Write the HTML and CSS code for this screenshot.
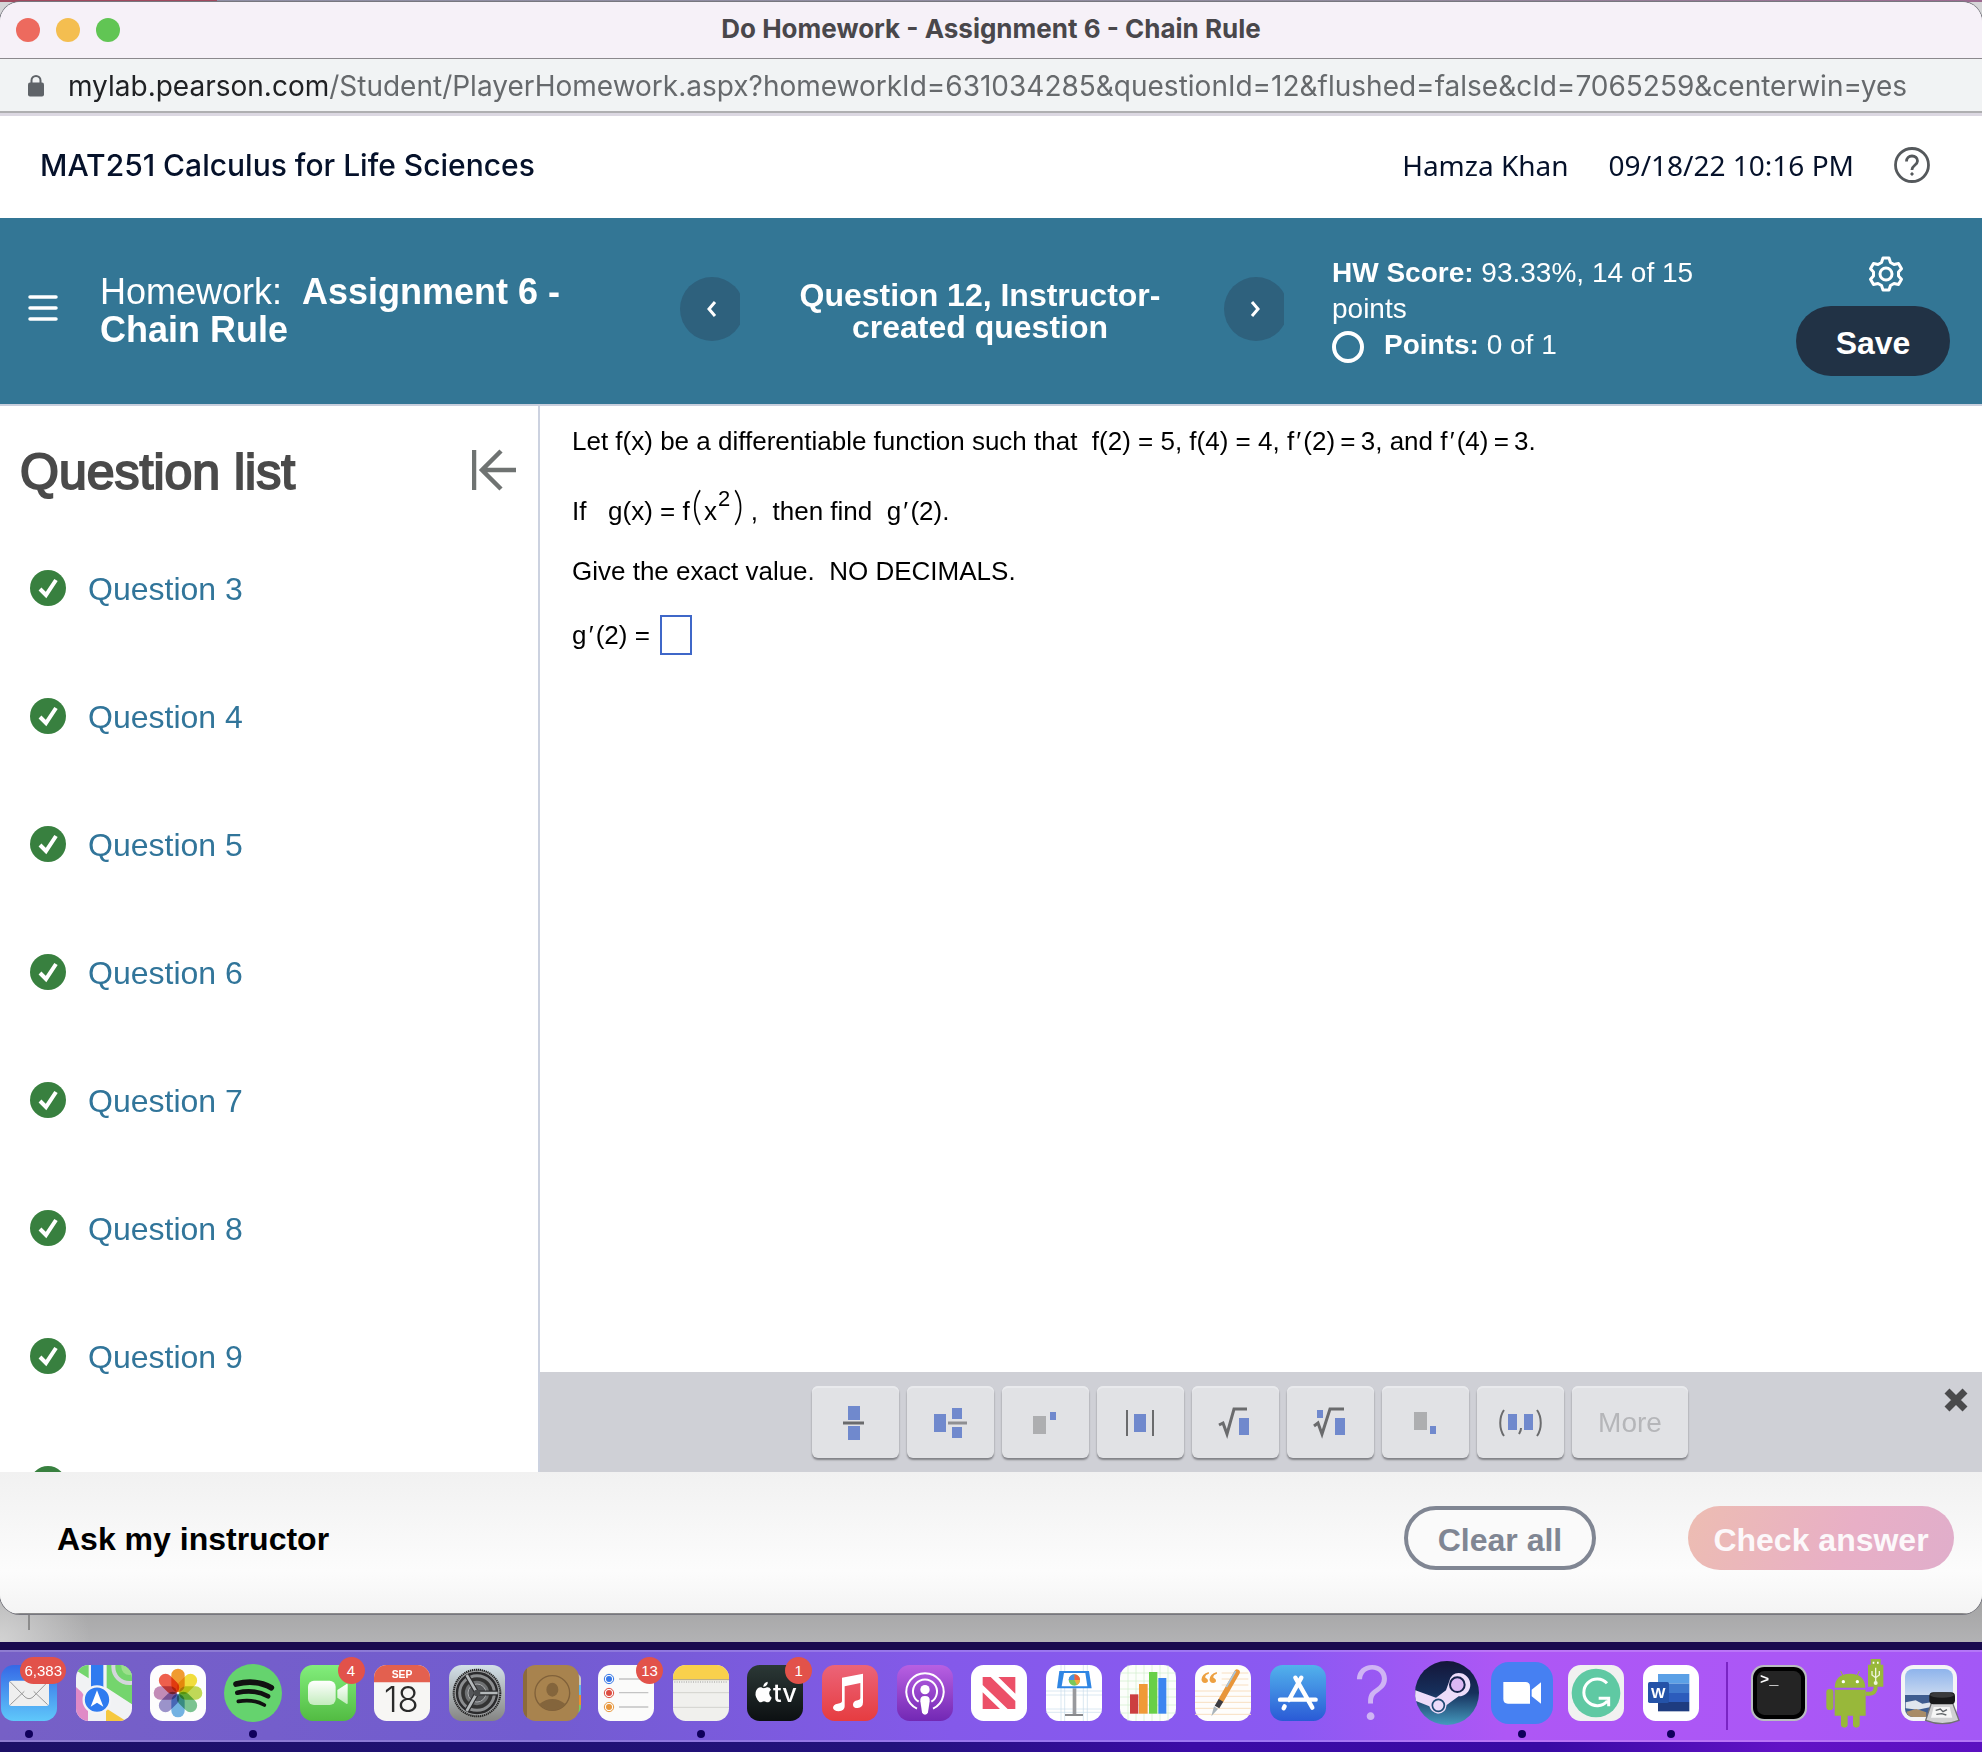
FILE: index.html
```html
<!DOCTYPE html>
<html lang="en">
<head>
    <meta charset="UTF-8">
    <meta name="viewport" content="width=device-width, initial-scale=1.0">
    <title>Do Homework - Assignment 6 - Chain Rule</title>
    <link rel="stylesheet" href="styles.css">
</head>
<body>

<div class="window">
    <div class="title-bar">
        <div class="lights">
            <span class="light red"></span>
            <span class="light yellow"></span>
            <span class="light green"></span>
        </div>
        <div class="window-title">Do Homework - Assignment 6 - Chain Rule</div>
    </div>

    <div class="url-bar">
        <svg class="lock" viewBox="0 0 18 24"><path d="M4.500 10V6.500a4.500 4.500 0 0 1 9 0V10" fill="none" stroke="#5f6368" stroke-width="2"/><rect x="1" y="8.500" width="16" height="14" rx="2" fill="#5f6368"/></svg>
        <div class="url"><span class="host">mylab.pearson.com</span>/Student/PlayerHomework.aspx?homeworkId=631034285&amp;questionId=12&amp;flushed=false&amp;cId=7065259&amp;centerwin=yes</div>
    </div>

    <header class="course-bar">
        <div class="course">MAT251 Calculus for Life Sciences</div>
        <div class="user">Hamza Khan</div>
        <div class="date">09/18/22 10:16 PM</div>
        <button class="icon-button help" aria-label="Help">
            <svg viewBox="0 0 36 36" fill="none" stroke="#55595c" stroke-width="2.800"><circle cx="18" cy="18" r="16.500"/><path d="M12.500 14.500c0-3.300 2.300-5.500 5.500-5.500s5.500 2 5.500 5c0 4-5.500 4.500-5.500 8.500v.5"/><circle cx="18" cy="27" r="1.200" fill="#55595c" stroke-width="1"/></svg>
        </button>
    </header>

    <div class="homework-bar">
        <button class="icon-button menu" aria-label="Menu">
            <svg viewBox="0 0 30 28" stroke="#fff" stroke-width="3.500" stroke-linecap="round"><path d="M2 3h26M2 14h26M2 25h26"/></svg>
        </button>
        <h1 class="homework-title">Homework:&nbsp; <b>Assignment 6 - Chain Rule</b></h1>
        <nav class="pager">
            <button class="round" aria-label="Previous question">
                <svg viewBox="0 0 64 64" fill="none" stroke="#fff" stroke-width="3"><path d="M35 25l-6 7 6 7"/></svg>
            </button>
            <h2 class="question-title">Question 12, Instructor-created question</h2>
            <button class="round" aria-label="Next question">
                <svg viewBox="0 0 64 64" fill="none" stroke="#fff" stroke-width="3"><path d="M28 25l6 7-6 7"/></svg>
            </button>
        </nav>
        <div class="score">
            <div><b>HW Score:</b> 93.33%, 14 of 15 points</div>
            <div class="points"><span class="ring"></span><span><b>Points:</b> 0 of 1</span></div>
        </div>
        <div class="actions">
            <button class="icon-button settings" aria-label="Settings">
                <svg viewBox="0 0 36 36" fill="none" stroke="#fff" stroke-width="3" stroke-linejoin="round"><path d="M15 2h6l1.500 4.500 3.500 2 4.500-1 3 5.200-3 3.300v4l3 3.300-3 5.200-4.500-1-3.500 2L21 34h-6l-1.500-4.500-3.500-2-4.500 1-3-5.200 3-3.300v-4l-3-3.300 3-5.200 4.500 1 3.500-2z"/><circle cx="18" cy="18" r="6"/></svg>
            </button>
            <button class="save">Save</button>
        </div>
    </div>

    <div class="content">
        <aside class="sidebar">
            <div class="sidebar-head">
                <h2>Question list</h2>
                <button class="icon-button collapse" aria-label="Collapse list">
                    <svg viewBox="0 0 44 42" fill="none" stroke="#6f7372" stroke-width="4.500"><path d="M2 1v40M44 21H11M29 2L10 21l19 19"/></svg>
                </button>
            </div>
            <svg class="defs">
                <symbol id="check" viewBox="0 0 36 36"><circle cx="18" cy="18" r="18" fill="#38803f"/><path d="M10 19l6 6L26 10" fill="none" stroke="#fff" stroke-width="4"/></symbol>
            </svg>
            <ul class="question-list">
                <li><svg class="check"><use href="#check"/></svg><a href="#">Question 3</a></li>
                <li><svg class="check"><use href="#check"/></svg><a href="#">Question 4</a></li>
                <li><svg class="check"><use href="#check"/></svg><a href="#">Question 5</a></li>
                <li><svg class="check"><use href="#check"/></svg><a href="#">Question 6</a></li>
                <li><svg class="check"><use href="#check"/></svg><a href="#">Question 7</a></li>
                <li><svg class="check"><use href="#check"/></svg><a href="#">Question 8</a></li>
                <li><svg class="check"><use href="#check"/></svg><a href="#">Question 9</a></li>
                <li><svg class="check"><use href="#check"/></svg></li>
            </ul>
        </aside>

        <main class="work">
            <div class="problem">
                <p>Let f(x) be a differentiable function such that&nbsp; f(2) = 5, f(4) = 4, f&#8202;&prime;&#8202;(2)&#8201;=&#8201;3, and f&#8202;&prime;&#8202;(4)&#8201;=&#8201;3.</p>
                <p>If&nbsp;&nbsp; g(x) = f<span class="paren">(</span>x<sup>2</sup><span class="paren">)</span>&#8201;,&nbsp; then find&nbsp; g&#8202;&prime;&#8202;(2).</p>
                <p>Give the exact value.&nbsp; NO DECIMALS.</p>
                <p class="answer-row"><label for="answer">g&#8202;&prime;&#8202;(2) =</label><input type="text" id="answer" class="answer"></p>
            </div>

            <div class="palette">
                <button class="key" aria-label="Fraction"><svg viewBox="0 0 87 72"><path class="blue" d="M36 20h12v14H36zM36 40h12v14H36z"/><path class="line" d="M31 37h21"/></svg></button>
                <button class="key" aria-label="Mixed number"><svg viewBox="0 0 87 72"><path class="blue" d="M27 28h12v18H27zM45 22h10v11H45zM45 41h10v11H45z"/><path class="line light-line" d="M41 37h19"/></svg></button>
                <button class="key" aria-label="Exponent"><svg viewBox="0 0 87 72"><path class="gray" d="M31 30h13v18H31z"/><path class="blue" d="M48 26h6v8h-6z"/></svg></button>
                <button class="key" aria-label="Absolute value"><svg viewBox="0 0 87 72"><path class="blue" d="M37 28h12v18H37z"/><path class="line thin" d="M30 24v26M56 24v26"/></svg></button>
                <button class="key" aria-label="Square root"><svg viewBox="0 0 87 72"><path class="blue" d="M47 32h10v17H47z"/><path class="line root" d="M27 39l4-2 4 11 7-25h13"/></svg></button>
                <button class="key" aria-label="Nth root"><svg viewBox="0 0 87 72"><path class="blue" d="M48 32h10v17H48zM30 24h6v8h-6z"/><path class="line root" d="M27 40l4-3 4 11 8-25h14"/></svg></button>
                <button class="key" aria-label="Subscript"><svg viewBox="0 0 87 72"><path class="gray" d="M32 26h13v18H32z"/><path class="blue" d="M48 40h6v8h-6z"/></svg></button>
                <button class="key" aria-label="Ordered pair"><svg viewBox="0 0 87 72"><path class="blue" d="M31 28h9v16h-9zM47 28h9v16h-9z"/><path class="line thin" d="M27 24c-5 7-5 19 0 26M60 24c5 7 5 19 0 26M44 42c0 3-1 4-2 6"/></svg></button>
                <button class="key more">More</button>
                <button class="icon-button close" aria-label="Close">
                    <svg viewBox="0 0 24 24" stroke="#4a4a4c" stroke-width="7"><path d="M3 3l18 18M21 3L3 21"/></svg>
                </button>
            </div>
        </main>
    </div>

    <footer class="footer">
        <a href="#" class="ask">Ask my instructor</a>
        <button class="pill clear">Clear all</button>
        <button class="pill submit">Check answer</button>
    </footer>
</div>

<div class="behind"></div>

<div class="dock">
    <div class="apps">
        <div class="app running">
            <svg viewBox="0 0 168 168">
                <defs><linearGradient id="mail" x2="0" y2="1"><stop stop-color="#3568e6"/><stop offset="1" stop-color="#5fc8fa"/></linearGradient></defs>
                <rect width="168" height="168" rx="38" fill="url(#mail)"/>
                <rect x="24" y="47" width="120" height="76" rx="8" fill="#efefef"/>
                <path d="M28 119l42-40M140 119L98 79M27 50l45 46q12 10 24 0l45-46" fill="none" stroke="#999" stroke-width="3"/>
            </svg>
            <span class="badge">6,383</span>
        </div>
        <div class="app">
            <svg viewBox="0 0 168 168">
                <defs><clipPath id="tile"><rect width="168" height="168" rx="38"/></clipPath></defs>
                <g clip-path="url(#tile)">
                    <rect width="168" height="168" fill="#f1f2f4"/>
                    <path d="M0 0h38v40L0 16zM92 0h76v118L92 68z" fill="#74d56d"/>
                    <path d="M0 66q36 28 36 60v42H0z" fill="#e08ac6"/>
                    <path d="M90 130l60 38H90z" fill="#f6c83f"/>
                    <path d="M45 0h37v90H45z" fill="#2f7bf0"/>
                    <circle cx="160" cy="6" r="48" fill="none" stroke="#d4d6dc" stroke-width="12"/>
                    <circle cx="160" cy="6" r="24" fill="#9ce08c"/>
                </g>
                <circle cx="63" cy="104" r="40" fill="#2f7bf0" stroke="#f4f4f6" stroke-width="7"/>
                <path d="M63 76l19 49-19-12-19 12z" fill="#fff"/>
            </svg>
        </div>
        <div class="app">
            <svg viewBox="0 0 168 168">
                <rect width="168" height="168" rx="38" fill="#fdfdfd"/>
                <g class="petals">
                    <rect x="64" y="11" width="40" height="70" rx="20" fill="#f29c30"/>
                    <rect x="64" y="11" width="40" height="70" rx="20" fill="#f3df3c" transform="rotate(45 84 84)"/>
                    <rect x="64" y="11" width="40" height="70" rx="20" fill="#c2da58" transform="rotate(90 84 84)"/>
                    <rect x="64" y="11" width="40" height="70" rx="20" fill="#7cc592" transform="rotate(135 84 84)"/>
                    <rect x="64" y="11" width="40" height="70" rx="20" fill="#74b4e4" transform="rotate(180 84 84)"/>
                    <rect x="64" y="11" width="40" height="70" rx="20" fill="#9c94cc" transform="rotate(225 84 84)"/>
                    <rect x="64" y="11" width="40" height="70" rx="20" fill="#c48cb8" transform="rotate(270 84 84)"/>
                    <rect x="64" y="11" width="40" height="70" rx="20" fill="#f0604c" transform="rotate(315 84 84)"/>
                </g>
            </svg>
        </div>
        <div class="app running">
            <svg viewBox="0 0 168 168">
                <circle cx="84" cy="84" r="87" fill="#65d36e"/>
                <path d="M33 57q60-15 106 11" stroke-width="17" class="wave"/><path d="M37 83q52-12 92 11" stroke-width="14" class="wave"/><path d="M40 109q44-8 78 11" stroke-width="11" class="wave"/>
            </svg>
        </div>
        <div class="app">
            <svg viewBox="0 0 168 168">
                <defs><linearGradient id="ft" x2="0" y2="1"><stop stop-color="#82ee7c"/><stop offset="1" stop-color="#52bb42"/></linearGradient><linearGradient id="cam" x2="0" y2="1"><stop stop-color="#fff"/><stop offset="1" stop-color="#c3ecbd"/></linearGradient></defs>
                <rect width="168" height="168" rx="38" fill="url(#ft)"/>
                <rect x="24" y="47" width="83" height="73" rx="18" fill="url(#cam)"/><path d="M112 75l29-19q2 0 2 3v55q0 4-4 2l-27-18z" fill="url(#cam)"/>
            </svg>
            <span class="badge">4</span>
        </div>
        <div class="app">
            <svg viewBox="0 0 168 168">
                <rect width="168" height="168" rx="38" fill="#f7f6f4"/>
                <path d="M0 52V38A38 38 0 0 1 38 0h92a38 38 0 0 1 38 38v14z" fill="#e3604f"/>
                <text x="84" y="39" class="month">SEP</text>
                <text x="82" y="142" class="day">18</text>
            </svg>
        </div>
        <div class="app">
            <svg viewBox="0 0 168 168">
                <defs><linearGradient id="pref" x2="0" y2="1"><stop stop-color="#d3e0e8"/><stop offset="1" stop-color="#858583"/></linearGradient></defs>
                <rect width="168" height="168" rx="38" fill="url(#pref)"/>
                <circle cx="84" cy="84" r="70" fill="#9a9c9e" stroke="#222" stroke-width="6" stroke-dasharray="4 2"/>
                <circle cx="84" cy="84" r="60" fill="#8c8e90" stroke="#2a2a2c" stroke-width="7"/>
                <circle cx="84" cy="84" r="42" fill="#6e7072" stroke="#333" stroke-width="11"/>
                <circle cx="84" cy="84" r="27" fill="#55575a" stroke="#aaacae" stroke-width="3"/>
                <path d="M84 84h62M84 84L53 30M84 84l-31 54" stroke="#2c2c2e" stroke-width="15"/>
                <path d="M84 84h62M84 84L53 30M84 84l-31 54" stroke="#b4b8ba" stroke-width="8"/>
                <circle cx="84" cy="84" r="10" fill="#4a4c4e"/>
            </svg>
        </div>
        <div class="app">
            <svg viewBox="0 0 168 168">
                <path d="M150 20q24 8 24 20v20h-24z" fill="#c9c8c2"/><path d="M150 60h24v30h-24z" fill="#62b4ea"/><path d="M150 90h24v30h-24z" fill="#ee8f2e"/><path d="M150 120h24q2 24-24 30z" fill="#70cf62"/>
                <rect width="168" height="168" rx="38" fill="#a8834e"/>
                <path d="M12 10Q0 20 0 38v92q0 18 12 28z" fill="#8c6a3c"/>
                <circle cx="88" cy="84" r="52" fill="none" stroke="#80613a" stroke-width="4"/>
                <ellipse cx="88" cy="74" rx="18" ry="21" fill="#84653c"/><path d="M48 118q40-32 80 0-40 36-80 0z" fill="#84653c"/>
            </svg>
        </div>
        <div class="app">
            <svg viewBox="0 0 168 168">
                <rect width="168" height="168" rx="38" fill="#fbfbfa"/>
                <path d="M63 42h88M63 83h88M63 126h88" stroke="#c4c4c4" stroke-width="4"/>
                <g fill="none" stroke-width="3"><circle cx="33" cy="42" r="14" stroke="#3577e8"/><circle cx="33" cy="84" r="14" stroke="#dd4c40"/><circle cx="33" cy="126" r="14" stroke="#e8963a"/></g>
                <circle cx="33" cy="42" r="9" fill="#3577e8"/><circle cx="33" cy="84" r="9" fill="#dd4c40"/><circle cx="33" cy="126" r="9" fill="#e8963a"/>
            </svg>
            <span class="badge">13</span>
        </div>
        <div class="app running">
            <svg viewBox="0 0 168 168">
                <rect width="168" height="168" rx="38" fill="#f0f0ed"/>
                <path d="M0 43v-5A38 38 0 0 1 38 0h92a38 38 0 0 1 38 38v5z" fill="#f9d04c"/>
                <path d="M0 44h168" stroke="#b3a47c" stroke-width="3"/><path d="M4 51h160" stroke="#b8b8b4" stroke-width="4" stroke-dasharray="3 4"/>
                <path d="M0 83h168M0 127h168" stroke="#d2d2ce" stroke-width="3"/>
            </svg>
        </div>
        <div class="app">
            <svg viewBox="0 0 168 168">
                <defs><linearGradient id="tv" x2="0" y2="1"><stop stop-color="#2b3836"/><stop offset="1" stop-color="#0c1012"/></linearGradient></defs>
                <rect width="168" height="168" rx="38" fill="url(#tv)"/>
                <path d="M62 50q2 12-13 16-1-12 13-16zM48 70q6 0 12-3 8-1 12 7-12 10 2 24-4 12-11 14-4 0-7-2-5-2-10 0-6 3-9 1-14-14-11-30 4-15 17-14 4 3 7 3z" fill="#fff"/>
                <text x="78" y="111" class="tv-text">tv</text>
            </svg>
            <span class="badge">1</span>
        </div>
        <div class="app">
            <svg viewBox="0 0 168 168">
                <defs><linearGradient id="music" x2="0" y2="1"><stop stop-color="#ec6478"/><stop offset="1" stop-color="#e63c40"/></linearGradient></defs>
                <rect width="168" height="168" rx="38" fill="url(#music)"/>
                <path d="M60 38l63-12v86q0 16-16 17-14 0-14-10 0-11 14-13 8-1 8-6V54L68 64v60q0 14-18 15-15-1-17-10 0-11 14-13 13-1 13-8z" fill="#fff"/>
            </svg>
        </div>
        <div class="app">
            <svg viewBox="0 0 168 168">
                <defs><linearGradient id="pod" x2="0" y2="1"><stop stop-color="#b860e2"/><stop offset="1" stop-color="#7228b4"/></linearGradient></defs>
                <rect width="168" height="168" rx="38" fill="url(#pod)"/>
                <path d="M60 131a56 56 0 1 1 48 0M65 110a36 36 0 1 1 38 0" fill="none" stroke="#fff" stroke-width="6"/>
                <circle cx="84" cy="74" r="14" fill="#fff"/><path d="M84 93q16 0 14 16l-5 33q-2 7-9 7t-9-7l-5-33q-2-16 14-16z" fill="#fff"/>
            </svg>
        </div>
        <div class="app">
            <svg viewBox="0 0 168 168">
                <rect width="168" height="168" rx="38" fill="#fff"/>
                <path d="M35 36h24l74 72v24h-23L35 60zM35 82l52 50H35zM133 36v50L82 36z" fill="#ec5068"/>
            </svg>
        </div>
        <div class="app">
            <svg viewBox="0 0 168 168">
                <rect width="168" height="168" rx="38" fill="#fff"/>
                <path d="M45 0v168M56 0v168M112 0v168M124 0v168M0 78h168M0 90h168M0 132h168M0 142h168" stroke="#c8dcec" stroke-width="2"/>
                <path d="M80 70h11v80H80z" fill="#98999d"/><path d="M57 147h54v6H57z" fill="#88898c"/>
                <path d="M40 18h89l8 52H33z" fill="#2f86e4"/><path d="M54 24h64l6 40H47z" fill="#fff"/>
                <circle cx="85" cy="45" r="17" fill="#79c85a"/><path d="M85 45V28a17 17 0 0 1 17 17z" fill="#ee6040"/><path d="M85 45V28a17 17 0 0 0-17 17z" fill="#4890e4"/><path d="M85 45h17a17 17 0 0 1-9 15z" fill="#f0b040"/>
            </svg>
        </div>
        <div class="app">
            <svg viewBox="0 0 168 168">
                <rect width="168" height="168" rx="38" fill="#fcfefb"/>
                <path d="M24 0v168M48 0v168M72 0v168M96 0v168M120 0v168M144 0v168M0 24h168M0 48h168M0 72h168M0 96h168M0 120h168M0 144h168" stroke="#cfeecb" stroke-width="2"/>
                <path d="M30 88h25v58H30z" fill="#cc3e40"/><path d="M57 57h26v89H57z" fill="#f09a36"/><path d="M87 21h25v125H87z" fill="#68d048"/><path d="M115 39h24v107h-24z" fill="#3b86f0"/>
            </svg>
        </div>
        <div class="app">
            <svg viewBox="0 0 168 168">
                <rect width="168" height="168" rx="38" fill="#fefdfb"/>
                <path d="M0 78h168M0 94h168M0 112h168M0 130h168M0 148h168M80 24h80M80 42h80M80 60h80" stroke="#f8dfc0" stroke-width="3"/>
                <text x="14" y="92" class="quote">&ldquo;</text>
                <path d="M126 22L78 106" stroke="#e8963a" stroke-width="17" stroke-linecap="round"/><path d="M122 18L94 66" stroke="#a8c4dc" stroke-width="5"/>
                <path d="M78 106L66 126" stroke="#3c3c40" stroke-width="16"/><path d="M57 124l12 8-20 22z" fill="#aab4ba"/>
            </svg>
        </div>
        <div class="app">
            <svg viewBox="0 0 168 168">
                <defs><linearGradient id="store" x2="0" y2="1"><stop stop-color="#52b2ec"/><stop offset="1" stop-color="#2a5ad6"/></linearGradient></defs>
                <rect width="168" height="168" rx="38" fill="url(#store)"/>
                <path d="M94 38L57 105M44 124l-3 6M76 38l51 90M30 104h107" fill="none" stroke="#fff" stroke-width="13" stroke-linecap="round"/>
            </svg>
        </div>
        <div class="app missing">?</div>
        <div class="app">
            <svg viewBox="0 0 168 168">
                <defs><linearGradient id="steam" x2="0" y2="1"><stop stop-color="#14163a"/><stop offset=".5" stop-color="#16305c"/><stop offset="1" stop-color="#459abe"/></linearGradient></defs>
                <circle cx="84" cy="84" r="96" fill="url(#steam)"/>
                <path d="M-11 76l62 22 30-22 10-28q6-24 28-24a35 35 0 0 1 0 70l-36 26q-3 26-26 26-20-2-26-22l-40-16q-4-16-2-32z" fill="#ecdcfa"/>
                <circle cx="115" cy="59" r="22" fill="#dcb8f4" stroke="#16244c" stroke-width="6"/><circle cx="58" cy="121" r="18" fill="none" stroke="#1f4a74" stroke-width="5"/>
            </svg>
        </div>
        <div class="app running">
            <svg viewBox="0 0 168 168">
                <rect x="-9" y="-9" width="186" height="186" rx="54" fill="#4680f2"/>
                <path d="M28 51h66q14 0 14 14v51H42q-14 0-14-14zM113 74l28-22v64l-28-22z" fill="#fff"/>
            </svg>
        </div>
        <div class="app">
            <svg viewBox="0 0 168 168">
                <rect width="168" height="168" rx="38" fill="#f1f1f0"/><circle cx="84" cy="84" r="73" fill="#5fc9a3"/>
                <path d="M117 55A40 40 0 1 0 118 108M92 100h30v24" fill="none" stroke="#fff" stroke-width="9"/>
            </svg>
        </div>
        <div class="app running">
            <svg viewBox="0 0 168 168">
                <rect width="168" height="168" rx="38" fill="#fff"/>
                <path d="M45 27h94v29H45z" fill="#5ba0e6"/><path d="M45 56h94v28H45z" fill="#3f78cc"/><path d="M45 84h94v27H45z" fill="#2c5cbc"/><path d="M45 111h94v28H45z" fill="#1e3c80"/>
                <rect x="15" y="51" width="63" height="63" rx="5" fill="#2453a8"/>
                <text x="46" y="99" class="word">W</text>
            </svg>
        </div>
    </div>

    <div class="divider"></div>

    <div class="recent">
        <div class="app">
            <svg viewBox="0 0 168 168">
                <rect width="168" height="168" rx="38" fill="#b9bcc0"/><rect x="6" y="6" width="156" height="156" rx="34" fill="#000"/><rect x="18" y="18" width="132" height="132" rx="22" fill="#242424"/>
                <text x="27" y="56" class="prompt">&gt;_</text>
            </svg>
        </div>
        <div class="app">
            <svg viewBox="0 0 168 168">
                <g fill="#98b83a">
                    <path d="M26 68q2-42 46-42t46 42zM26 74h93v78H26z"/>
                    <rect x="1" y="72" width="21" height="63" rx="10"/><rect x="45" y="140" width="20" height="48" rx="10"/><rect x="81" y="140" width="20" height="48" rx="10"/>
                    <path d="M126-1h46v66h-46zM134-18h30v20h-30z"/>
                    <path d="M119 86h10q22 0 20-24" fill="none" stroke="#98b83a" stroke-width="12"/>
                    <path d="M44 18l8 16M100 18l-8 16" stroke="#98b83a" stroke-width="3"/>
                </g>
                <circle cx="52" cy="50" r="5" fill="#fff"/><circle cx="94" cy="50" r="5" fill="#fff"/>
                <path d="M149 8v44M138 18v12l11 8 11-8V18" fill="none" stroke="#eef4dc" stroke-width="4"/><circle cx="149" cy="54" r="6" fill="#eef4dc"/>
                <path d="M140-10h5v6h-5zM153-10h5v6h-5z" fill="#fff"/>
            </svg>
        </div>
        <div class="app">
            <svg viewBox="0 0 168 168">
                <defs><linearGradient id="sky" x2="0" y2="1"><stop stop-color="#8eb4ec"/><stop offset="1" stop-color="#c8d8f0"/></linearGradient></defs>
                <rect width="168" height="168" rx="38" fill="#f4f4f6"/>
                <path d="M12 90V36a24 24 0 0 1 24-24h96a24 24 0 0 1 24 24v54z" fill="url(#sky)"/>
                <path d="M12 90h144v66H36a24 24 0 0 1-24-24z" fill="#3f5d90"/><path d="M14 112l30-6 20 10 26-4v14l-40 8-36-4z" fill="#dfe6ee"/><path d="M16 140l30-8 30 10v14H36q-16-2-20-16z" fill="#a88c68"/>
                <path d="M92 112h62l20 54q-50 20-100 0z" fill="#d0d0d2" stroke="#707074" stroke-width="4"/><path d="M98 126h48l8 32H90z" fill="#f6f6f6"/><path d="M104 136l14-4 8 8 12-6M106 148l16-2 14 4" stroke="#606468" stroke-width="4" fill="none"/>
                <rect x="85" y="82" width="77" height="36" rx="12" fill="#18181a"/><ellipse cx="123" cy="90" rx="36" ry="8" fill="#3a3a3c"/>
            </svg>
        </div>
    </div>
</div>

</body>
</html>
```
FILE: styles.css
```css
* {
    box-sizing: border-box;
}
body {
    font-family: "Liberation Sans", Arial, sans-serif;
    margin: 0;
    height: 100vh;
    overflow: hidden;
    display: flex;
    flex-direction: column;
    padding-top: 2px;
    padding-bottom: 10px;
    background:
        linear-gradient(90deg, #a04a5f 217px, #8f8fa5 217px, #908a9c 70%, #9c6a90) 0 0 / 100% 2px no-repeat,
        linear-gradient(#d6d6d8, #d6d6d8) 0 0 / 100% 30px no-repeat,
        linear-gradient(90deg, #1c1066 0, #22127c 45%, #3b0ba6 60%, #380aa4 78%, #6212c6 90%, #5a10c0 100%);
}
h1, h2, p, ul {
    margin: 0;
    padding: 0;
}
button {
    font-family: inherit;
    border: none;
    cursor: pointer;
}
.icon-button {
    background: none;
    padding: 0;
}
.icon-button svg {
    display: block;
    width: 100%;
}
.defs {
    display: none;
}

/* browser window */
.window {
    flex: 1;
    min-height: 0;
    display: flex;
    flex-direction: column;
    background-color: #fff;
    border-radius: 20px;
    overflow: hidden;
    position: relative;
    z-index: 1;
    box-shadow: 0 0 0 1px #77777f;
}
.title-bar {
    display: flex;
    align-items: center;
    height: 57px;
    padding: 0 16px;
    background-color: #f6f1f8;
    border-bottom: 1px solid #8b888d;
}
.lights {
    flex: 1;
    display: flex;
    gap: 16px;
}
.light {
    width: 24px;
    height: 24px;
    border-radius: 50%;
}
.red {
    background-color: #ed6a5e;
}
.yellow {
    background-color: #f4be50;
}
.green {
    background-color: #61c554;
}
.window-title {
    margin-bottom: 2px;
    font-family: Inter, "Liberation Sans", sans-serif;
    font-size: 26px;
    font-weight: 700;
    line-height: 32px;
    color: #49474b;
}
.title-bar::after {
    content: "";
    flex: 1;
}
.url-bar {
    display: flex;
    align-items: center;
    gap: 23px;
    height: 54px;
    padding: 2px 27px 0;
    background-color: #f1f3f4;
    border-bottom: 2px solid #afafb1;
}
.lock {
    width: 18px;
    height: 24px;
}
.url {
    font-family: Inter, "Liberation Sans", sans-serif;
    font-size: 28px;
    line-height: 36px;
    white-space: nowrap;
    color: #66696c;
}
.host {
    color: #202124;
}

/* course header */
.course-bar {
    display: flex;
    align-items: center;
    height: 105px;
    padding: 0 52px 4px 40px;
    color: #05112a;
    font-size: 30px;
    line-height: 40px;
    border-top: 3px solid #dcd8e2;
}
.course {
    flex: 1;
    font-family: Inter, "Liberation Sans", sans-serif;
    font-weight: 500;
}
.user,
.date {
    font-family: "Noto Sans", "Open Sans", sans-serif;
    font-size: 28px;
    margin-right: 40px;
}
.help {
    width: 36px;
}

/* blue homework bar */
.homework-bar {
    display: grid;
    grid-template-columns: 72px minmax(0, 1fr) 604px 512px 154px;
    align-items: center;
    height: 188px;
    padding: 0 32px 0 28px;
    background-color: #337695;
    border-bottom: 2px solid #c9cfdd;
    color: #fff;
}
.menu {
    width: 30px;
    margin-bottom: 6px;
}
.homework-title {
    font-size: 36px;
    font-weight: 400;
    line-height: 38px;
    padding-right: 60px;
}
.pager {
    display: flex;
    align-items: center;
    justify-content: space-between;
}
.round {
    width: 60px;
    height: 64px;
    margin-bottom: 4px;
    padding: 0;
    overflow: hidden;
    background: none;
}
.round svg {
    display: block;
    width: 64px;
    height: 64px;
    border-radius: 50%;
    background-color: #2e617d;
}
.question-title {
    width: 380px;
    margin-right: 4px;
    font-size: 32px;
    line-height: 32px;
    text-align: center;
}
.score {
    padding: 0 48px;
    margin-bottom: 4px;
    font-size: 28px;
    line-height: 36px;
}
.points {
    display: flex;
    gap: 20px;
}
.ring {
    width: 32px;
    height: 32px;
    margin-top: 4px;
    border: 4px solid #fff;
    border-radius: 50%;
}
.actions {
    display: flex;
    flex-direction: column;
    align-items: flex-end;
    gap: 14px;
    padding-bottom: 8px;
    padding-top: 18px;
}
.settings {
    width: 36px;
    margin-right: 46px;
}
.save {
    width: 154px;
    height: 70px;
    padding: 4px 0 0;
    border-radius: 35px;
    background-color: #213245;
    color: #fff;
    font-size: 32px;
    font-weight: 700;
}

/* question list and problem */
.content {
    flex: 1;
    min-height: 0;
    display: flex;
}
.sidebar {
    width: 540px;
    border-right: 2px solid #ccd2e0;
    overflow: hidden;
}
.sidebar-head {
    display: flex;
    justify-content: space-between;
    align-items: center;
    padding: 36px 22px 0 20px;
}
.sidebar-head h2 {
    font-size: 50px;
    line-height: 60px;
    font-weight: 400;
    color: #4a4a4a;
    -webkit-text-stroke: 2px #4a4a4a;
}
.collapse {
    width: 44px;
    margin-bottom: 4px;
}
.question-list {
    list-style: none;
    padding: 22px 30px 0;
}
.question-list li {
    display: flex;
    align-items: center;
    gap: 22px;
    height: 128px;
    font-size: 32px;
}
.question-list a {
    padding-top: 2px;
    color: #31759a;
    text-decoration: none;
}
.check {
    width: 36px;
    height: 36px;
}
.work {
    flex: 1;
    display: flex;
    flex-direction: column;
}
.problem {
    flex: 1;
    padding: 19px 32px;
    color: #000;
    font-size: 26px;
}
.problem p {
    line-height: 32px;
    margin-bottom: 28px;
    white-space: nowrap;
}
.problem p:first-child {
    margin-bottom: 38px;
}
.problem sup {
    margin: 0 1px;
    font-size: 22px;
    line-height: 0;
    vertical-align: 14px;
}
.paren {
    margin: 0 2px;
    font-family: Lato, sans-serif;
    font-size: 40px;
    line-height: 0;
    font-weight: 300;
}
.problem .answer-row {
    display: flex;
    align-items: center;
    gap: 10px;
}
.answer {
    width: 32px;
    height: 40px;
    border: 2px solid #3f67c8;
    padding: 0;
    font-size: 26px;
}
.palette {
    position: relative;
    display: flex;
    justify-content: center;
    gap: 8px;
    height: 100px;
    padding: 14px 22px 0 0;
    background-color: #cfd0d6;
}
.key {
    width: 87px;
    height: 72px;
    padding: 0;
    border-radius: 6px;
    background-color: #e1e2e5;
    box-shadow: inset 0 2px #e9eaed, 0 2px 2px #808186;
}
.key svg {
    display: block;
    width: 87px;
    height: 72px;
}
.more {
    width: 116px;
    padding-top: 2px;
    font-size: 28px;
    color: #b5b6b9;
}
.blue {
    fill: #7089cd;
}
.gray {
    fill: #adaeb0;
}
.line {
    fill: none;
    stroke: #6a6b6d;
    stroke-width: 3;
}
.light-line {
    stroke: #8e8f92;
}
.thin {
    stroke-width: 2;
}
.close {
    position: absolute;
    top: 16px;
    right: 14px;
    width: 24px;
}

/* footer */
.footer {
    display: flex;
    align-items: center;
    height: 142px;
    padding: 0 28px 10px 57px;
    background: linear-gradient(#f1f1f1, #fcfcfc 70%, #f4f4f4);
    border-bottom: 1px solid #8c8c8c;
}
.ask {
    flex: 1;
    padding-top: 3px;
    font-size: 32px;
    font-weight: 700;
    color: #000;
    text-decoration: none;
}
.pill {
    height: 64px;
    padding: 5px 0 0;
    border-radius: 32px;
    font-size: 32px;
    font-weight: 700;
}
.clear {
    width: 192px;
    margin-right: 92px;
    border: 4px solid #808693;
    background-color: #fafafa;
    color: #808693;
}
.submit {
    width: 266px;
    background: linear-gradient(110deg, #edbdb2, #e8afc6 60%, #e0aecb);
    color: #fcf8fa;
}

/* strip of the page behind the window, then the dock */
.behind {
    height: 48px;
    margin-top: -20px;
    background:
        linear-gradient(#8c8c8c, #8c8c8c) 28px 0 / 2px 36px no-repeat,
        radial-gradient(circle at 0 100%, #d2d2d2, rgba(200, 200, 200, 0) 90px),
        linear-gradient(#a2a2a2, #b2b2b4);
}
.dock {
    display: flex;
    align-items: center;
    height: 100px;
    padding: 1px 25px 0 1px;
    border-top: 8px solid #190a4e;
    background: linear-gradient(90deg, #7660c6 0, #725cd0 27%, #8459ea 48%, #8b59f2 65%, #ae57f5 76%, #ab57f6 90%, #a358f6 100%);
    box-shadow: inset 0 2px rgba(255, 255, 255, .18), inset 0 -2px rgba(255, 255, 255, .18);
}
.apps {
    flex: 1;
    display: flex;
    justify-content: space-between;
}
.recent {
    display: flex;
    gap: 19px;
}
.divider {
    width: 2px;
    height: 68px;
    margin: 0 23px 2px 27px;
    background-color: #7a25c4;
}
.app {
    position: relative;
    width: 56px;
    height: 56px;
    margin-bottom: 8px;
}
.app svg {
    display: block;
    width: 56px;
    height: 56px;
    overflow: visible;
}
.running::after {
    content: "";
    position: absolute;
    left: 24px;
    bottom: -17px;
    width: 8px;
    height: 8px;
    border-radius: 50%;
    background-color: #10005c;
}
.badge {
    position: absolute;
    top: -8px;
    right: -9px;
    min-width: 27px;
    height: 27px;
    padding: 0 4px;
    border-radius: 14px;
    background-color: #e2524a;
    color: #fff;
    font-size: 15px;
    line-height: 27px;
    text-align: center;
}
.missing {
    font-family: Inter, sans-serif;
    font-weight: 300;
    font-size: 74px;
    line-height: 56px;
    text-align: center;
    color: #cfb4f4;
}
.petals rect {
    mix-blend-mode: multiply;
}
.wave {
    fill: none;
    stroke: #111;
    stroke-linecap: round;
}
.month {
    font-size: 31px;
    font-weight: 700;
    text-anchor: middle;
    fill: #fff;
}
.day {
    font-family: Inter, sans-serif;
    font-size: 104px;
    font-weight: 300;
    text-anchor: middle;
    fill: #2a2a2a;
}
.tv-text {
    font-family: Inter, sans-serif;
    font-size: 76px;
    font-weight: 500;
    fill: #fff;
}
.quote {
    font-family: "Liberation Serif", serif;
    font-size: 110px;
    font-weight: 700;
    fill: #eda040;
}
.word {
    font-size: 46px;
    font-weight: 700;
    text-anchor: middle;
    fill: #fff;
}
.prompt {
    font-family: "Liberation Mono", monospace;
    font-size: 46px;
    font-weight: 700;
    fill: #fff;
}
```
